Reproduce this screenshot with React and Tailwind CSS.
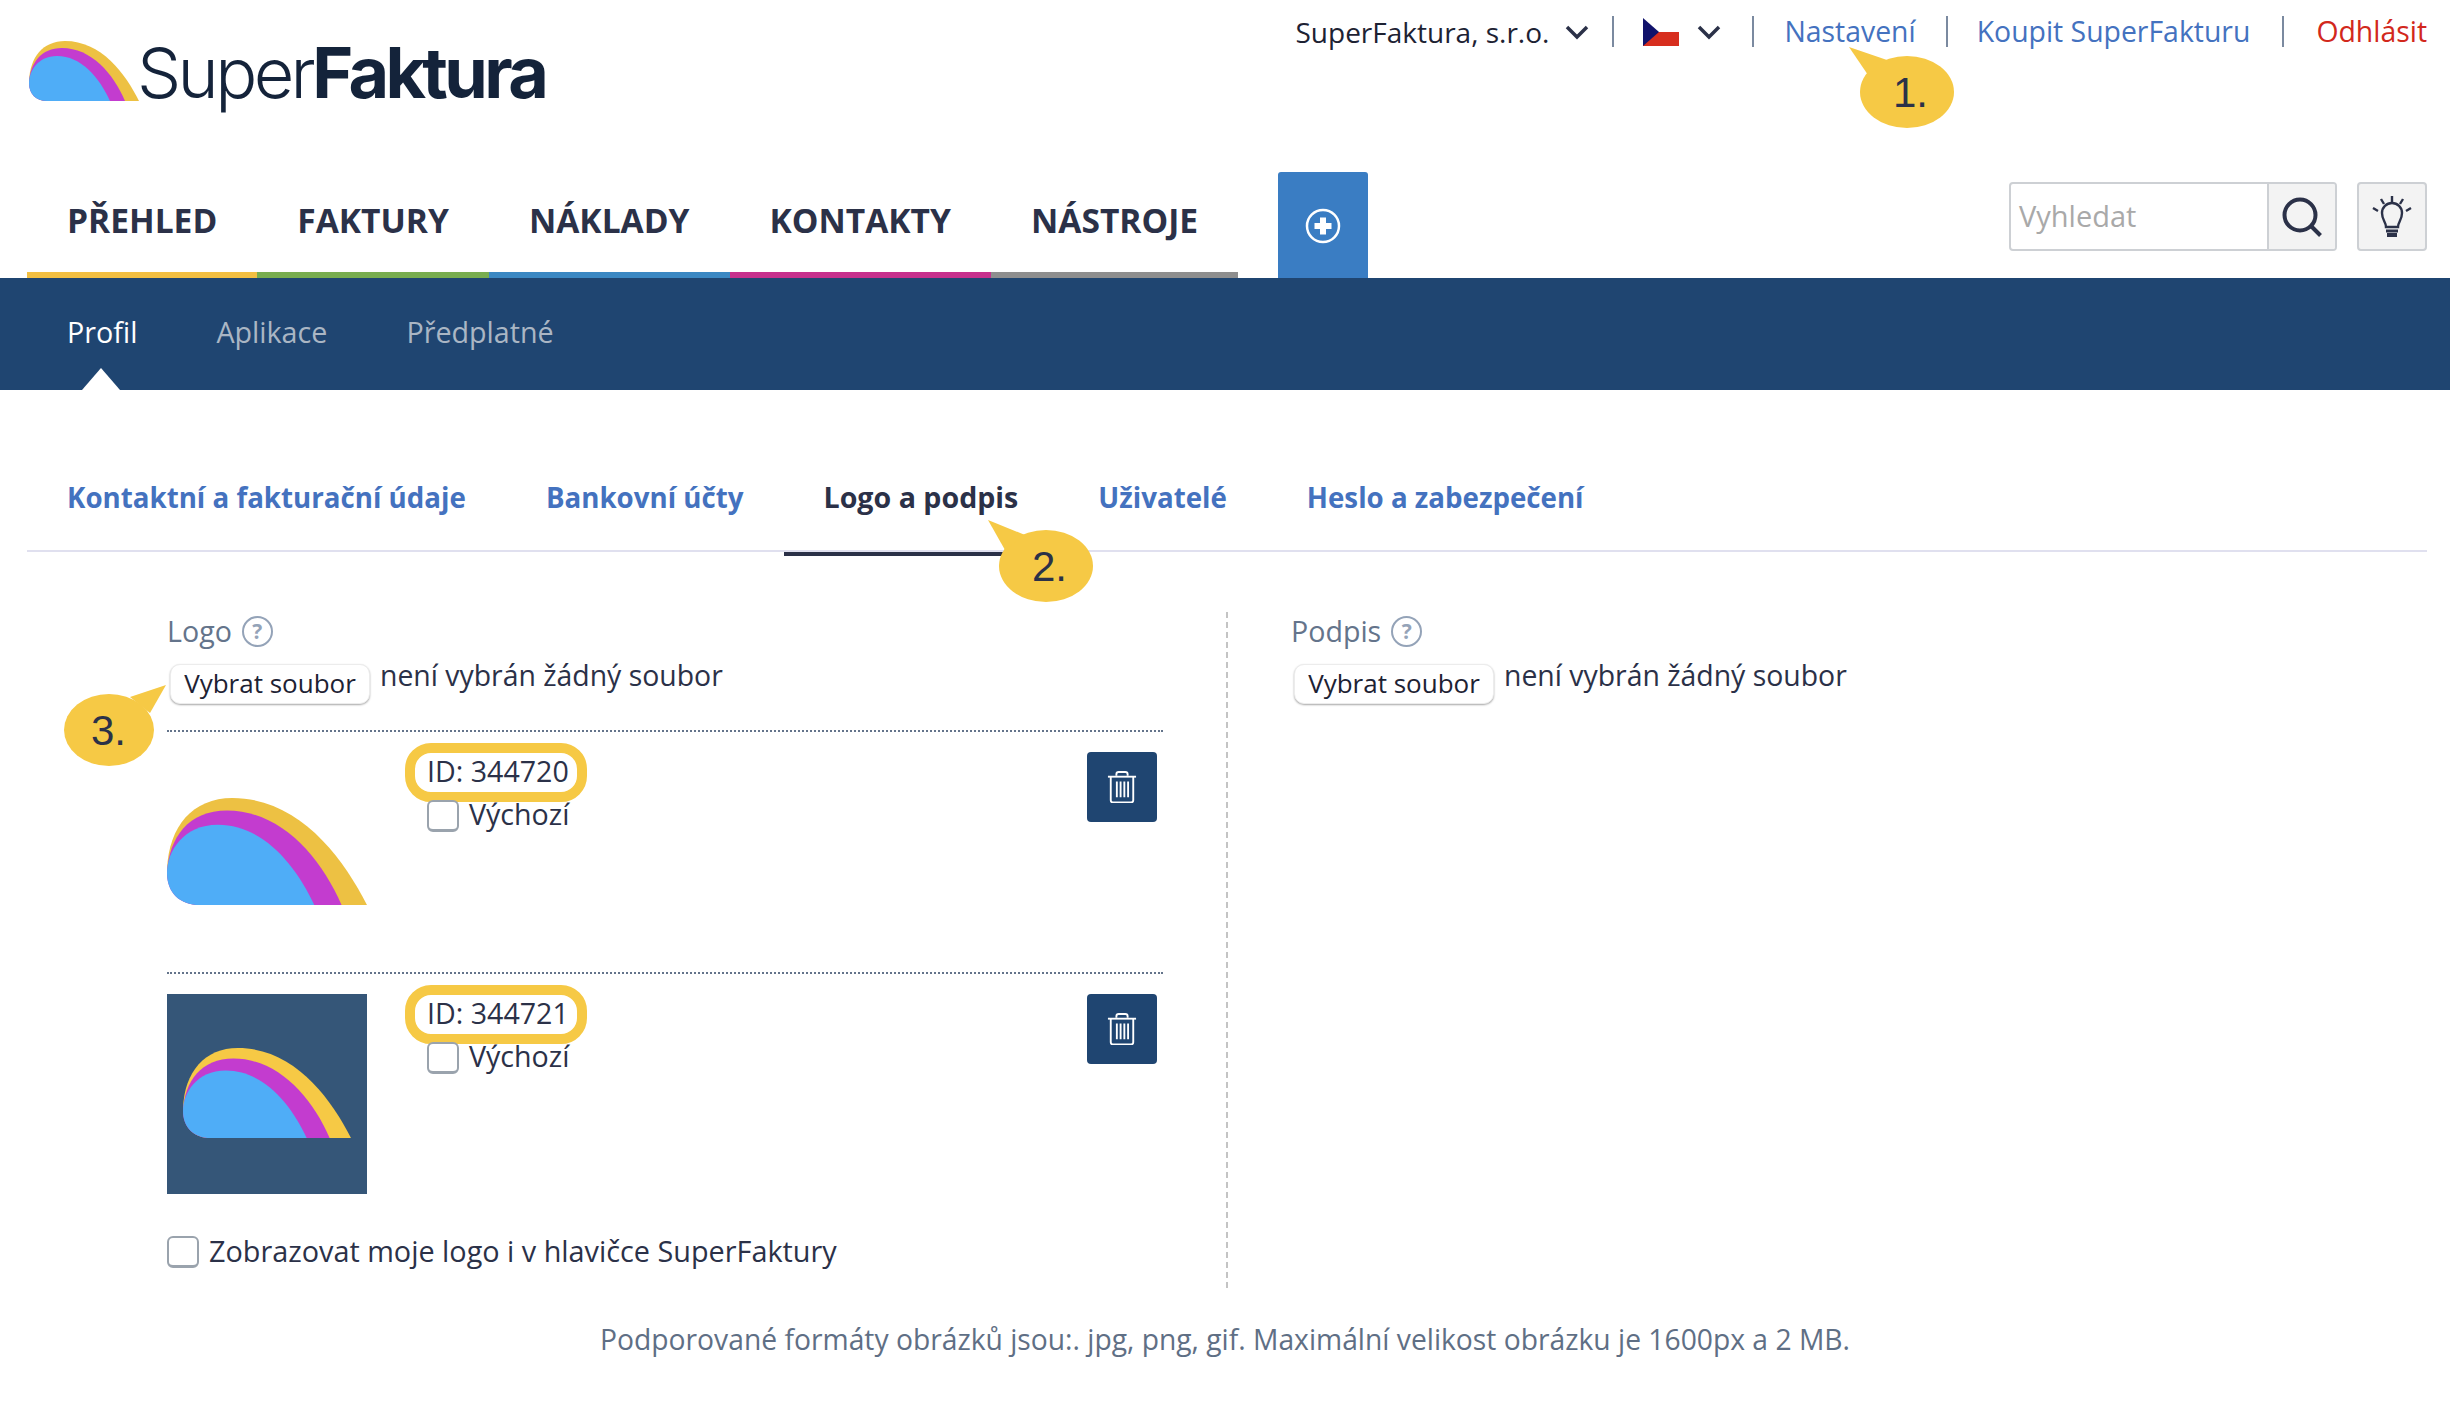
import React from 'react';

const LogoMark = ({ className, yellow = '#edc143' }) => (
  <svg viewBox="0 0 110 60" preserveAspectRatio="none" className={className}>
    <path d="M110 60C96 32 72 0 36 0C14 0 1 16 0 40C0 53 7 60 18 60Z" fill={yellow} />
    <path d="M96 60C84 32 62 7 33 7C12 7 1 22 0 42C0 53 7 60 18 60Z" fill="#c33ccf" />
    <path d="M81 60C70 36 52 15 28 15C9 15 0 30 0 42C0 53 7 60 18 60Z" fill="#4fadf7" />
  </svg>
);

const Chevron = ({ className }) => (
  <svg viewBox="0 0 24 16" className={className} fill="none" stroke="#2b3148" strokeWidth="3.5">
    <path d="M2 3l10 10 10-10" />
  </svg>
);

const Sep = () => <span className="block w-[2px] h-[31px] bg-[#7b8aa0]" />;

const TrashIcon = () => (
  <svg viewBox="0 0 32 34" className="w-[30px] h-[32px]" fill="none" stroke="#fff" strokeWidth="2">
    <path d="M1 6h30" />
    <path d="M10 5V3.5C10 2 11 1 12.5 1h7C21 1 22 2 22 3.5V5" />
    <path d="M4 6v25c0 1.5 1 2.5 2.5 2.5h19c1.500 0 2.500-1 2.500-2.500V6" />
    <path d="M10.500 11v17M14.500 11v17M18.500 11v17M22.500 11v17" />
  </svg>
);

const FileInput = () => (
  <div className="flex items-start mt-[10px]">
    <button className="mt-[3px] ml-[3px] w-[200px] h-[40px] pb-[2px] bg-white rounded-[10px] border border-[#ececec] shadow-[0_1px_2px_rgba(0,0,0,0.35)] text-[26px] leading-none text-[#1d2233]">Vybrat soubor</button>
    <span className="ml-[10px] -mt-[2px] text-[28.4px] leading-[32px] text-[#2b3148]">není vybrán žádný soubor</span>
  </div>
);

const Label = ({ children }) => (
  <div className="-mt-[1px] flex items-center h-[40px] text-[28.6px] text-[#64748b]">
    {children}
    <span className="ml-[10px] w-[31px] h-[31px] rounded-full border-2 border-[#94a3b8] flex items-center justify-center text-[21px] font-bold leading-none text-[#94a3b8]">?</span>
  </div>
);

const Checkbox = () => <span className="block w-[32px] h-[32px] shrink-0 rounded-[6px] border-2 border-b-[3px] border-[#9aa3ad] bg-white" />;

const LogoRow = ({ id, mark }) => (
  <div className="border-t-2 border-dotted border-[#64748b] h-[242px] flex">
    {mark}
    <div className="ml-[38px] mt-[11px]">
      <div className="w-[182px] h-[59px] rounded-[26px] border-[10px] border-[#f6c945] flex items-center pl-[12px] pb-[2px] text-[28.6px] whitespace-nowrap text-[#2b3148]">ID: {id}</div>
      <div className="ml-[22px] flex items-center h-[32px] text-[28.6px] text-[#2b3148] -mt-[2px]">
        <Checkbox />
        <span className="ml-[10px] -mt-[3px]">Výchozí</span>
      </div>
    </div>
    <button className="ml-auto mr-[6px] mt-[20px] w-[70px] h-[70px] rounded-[4px] bg-[#1f4571] flex items-center justify-center">
      <TrashIcon />
    </button>
  </div>
);

const Callout = ({ box, tail, ellipse, label, labelClass }) => (
  <div className={`absolute ${box}`}>
    <svg className="absolute inset-0 w-full h-full" fill="#f6c945">
      <ellipse {...ellipse} />
      <polygon points={tail} />
    </svg>
    <span className={`absolute font-['Liberation_Sans',sans-serif] text-[42px] leading-none text-[#2b3148] ${labelClass}`}>{label}</span>
  </div>
);

const navItems = [
  ['PŘEHLED', 'border-[#f2bf42]'],
  ['FAKTURY', 'border-[#78ad4f]'],
  ['NÁKLADY', 'border-[#3b88c3]'],
  ['KONTAKTY', 'border-[#c6308c]'],
  ['NÁSTROJE', 'border-[#8e8e8e]'],
];

const tabs = ['Kontaktní a fakturační údaje', 'Bankovní účty', 'Logo a podpis', 'Uživatelé', 'Heslo a zabezpečení'];

export default function App() {
  return (
    <div className="relative w-[2450px] h-[1421px] overflow-hidden bg-white font-['Open_Sans',sans-serif] text-[#2b3148]">
      {/* Top bar */}
      <div className="h-[172px] flex justify-between pl-[29px] pr-[23px]">
        <div className="flex items-start pt-[41px]">
          <LogoMark className="w-[110px] h-[60px]" />
          <div className="-ml-[2px] -mt-[10px] font-['Inter',sans-serif] text-[70px] leading-[84px] tracking-[-0.052em] text-[#14233a]">
            <span className="font-light">Super</span><span className="font-bold">Faktura</span>
          </div>
        </div>
        <div className="flex items-center h-[31px] mt-[16px] text-[28.4px] whitespace-nowrap">
          <span className="text-[28px] text-[#1d2233]">SuperFaktura, s.r.o.</span>
          <Chevron className="ml-[16px] w-[24px] h-[16px]" />
          <span className="ml-[23px]"><Sep /></span>
          <svg viewBox="0 0 36 28" className="ml-[29px] w-[36px] h-[28px]">
            <rect width="36" height="14" fill="#fff" />
            <rect y="14" width="36" height="14" fill="#d72e1e" />
            <path d="M0 0L16 14L0 28Z" fill="#11126b" />
          </svg>
          <Chevron className="ml-[18px] w-[24px] h-[16px]" />
          <span className="ml-[31px]"><Sep /></span>
          <a className="ml-[30px] text-[#4472bf]">Nastavení</a>
          <span className="ml-[30px]"><Sep /></span>
          <a className="ml-[29px] text-[#4472bf]">Koupit SuperFakturu</a>
          <span className="ml-[32px]"><Sep /></span>
          <a className="ml-[32px] text-[#d2281c]">Odhlásit</a>
        </div>
      </div>

      {/* Main nav */}
      <div className="h-[106px] flex pl-[27px] pr-[23px]">
        <div className="flex items-end">
          {navItems.map(([name, color]) => (
            <div key={name} className={`h-[100px] px-[40px] flex items-center border-b-[6px] pb-[9px] text-[33.55px] font-bold whitespace-nowrap ${color}`}>{name}</div>
          ))}
        </div>
        <button className="ml-[40px] w-[90px] h-[106px] rounded-t-[3px] bg-[#3a7dc3] flex items-center justify-center pt-[2px]">
          <svg viewBox="0 0 36 36" className="w-[36px] h-[36px]" fill="none" stroke="#fff">
            <circle cx="18" cy="18" r="16" strokeWidth="2.500" />
            <path d="M18 9.500v17M9.500 18h17" strokeWidth="6" />
          </svg>
        </button>
        <div className="ml-auto mt-[10px] flex h-[69px]">
          <div className="w-[328px] flex rounded-[4px] border-2 border-[#cdd0d4] overflow-hidden">
            <div className="flex-1 pl-[8px] pb-[2px] flex items-center text-[29px] text-[#a9a9a9]">Vyhledat</div>
            <div className="w-[68px] bg-[#f3f3f3] border-l-2 border-[#cdd0d4] flex items-center justify-center">
              <svg viewBox="0 0 40 40" className="w-[40px] h-[40px]" fill="none" stroke="#2b3148" strokeWidth="4">
                <circle cx="18" cy="18" r="15.500" />
                <path d="M29 29l9.500 9.500" />
              </svg>
            </div>
          </div>
          <div className="ml-[20px] w-[70px] rounded-[4px] border-2 border-[#cdd0d4] bg-[#f3f3f3] flex items-center justify-center">
            <svg viewBox="0 0 40 42" className="w-[40px] h-[42px]" fill="none" stroke="#2b3148" strokeWidth="2.400">
              <path d="M20 0v6M9 3l3 5M31 3l-3 5M1 12l5 3M39 12l-5 3" />
              <path d="M14 31c0-5-4-7-4-14a10 10 0 0 1 20 0c0 7-4 9-4 14Z" />
              <path d="M14 35h12" strokeWidth="3" />
              <path d="M15 39h10" strokeWidth="4" />
            </svg>
          </div>
        </div>
      </div>

      {/* Sub nav */}
      <div className="relative h-[112px] bg-[#1f4571] pl-[67px] flex text-[28.7px] pt-[32px] gap-[79px]">
        <span className="relative text-white">
          Profil
          <span className="absolute left-[15px] top-[58px] w-0 h-0 border-x-[19px] border-x-transparent border-b-[22px] border-b-white" />
        </span>
        <span className="text-[#aab6c4]">Aplikace</span>
        <span className="text-[#aab6c4]">Předplatné</span>
      </div>

      {/* Tabs */}
      <div className="ml-[27px] mr-[23px] h-[162px] border-b-2 border-[#e0e0ef] flex items-end text-[27.7px] font-bold">
        {tabs.map((t) => (
          <div
            key={t}
            className={t === 'Logo a podpis'
              ? 'h-[79px] -mb-[6px] px-[40px] border-b-[4px] border-[#2b3148] text-[28.6px] leading-[40px] text-[#2b3148] whitespace-nowrap'
              : 'h-[79px] -mb-[6px] px-[40px] leading-[40px] text-[#4472bf] whitespace-nowrap'}
          >{t}</div>
        ))}
      </div>

      {/* Content */}
      <div className="flex mt-[60px] mx-[27px] h-[676px]">
        <div className="w-[1201px] pl-[140px] pr-[63px] border-r-2 border-dashed border-[#c4c4c4]">
          <Label>Logo</Label>
          <FileInput />
          <div className="mt-[26px]">
            <LogoRow
              id="344720"
              mark={(
                <div className="w-[200px] h-[200px] pt-[66px]">
                  <LogoMark className="w-[200px] h-[107px]" />
                </div>
              )}
            />
            <LogoRow
              id="344721"
              mark={(
                <div className="mt-[20px] w-[200px] h-[200px] bg-[#355678] pl-[16px] pt-[54px]">
                  <LogoMark className="w-[168px] h-[90px]" yellow="#f6c945" />
                </div>
              )}
            />
          </div>
          <div className="flex items-center mt-[17px] text-[28.8px] text-[#2b3148]">
            <Checkbox />
            <span className="ml-[10px] -mt-[2px]">Zobrazovat moje logo i v hlavičce SuperFaktury</span>
          </div>
        </div>
        <div className="pl-[63px]">
          <Label>Podpis</Label>
          <FileInput />
        </div>
      </div>

      <div className="mt-[30px] text-center text-[28.25px] text-[#5f6f85]">Podporované formáty obrázků jsou:. jpg, png, gif. Maximální velikost obrázku je 1600px a 2 MB.</div>

      {/* Annotations */}
      <Callout box="left-[1845px] top-[44px] w-[112px] h-[86px]" ellipse={{ cx: 62, cy: 48, rx: 47, ry: 36 }} tail="4,3 42,16 23,31" label="1." labelClass="left-[48px] top-[28px]" />
      <Callout box="left-[985px] top-[517px] w-[110px] h-[88px]" ellipse={{ cx: 61, cy: 49, rx: 47, ry: 36 }} tail="3,3 40,18 20,33" label="2." labelClass="left-[47px] top-[29px]" />
      <Callout box="left-[60px] top-[682px] w-[110px] h-[88px]" ellipse={{ cx: 49, cy: 48, rx: 45, ry: 36 }} tail="106,3 70,15 90,31" label="3." labelClass="left-[31px] top-[28px]" />
    </div>
  );
}
